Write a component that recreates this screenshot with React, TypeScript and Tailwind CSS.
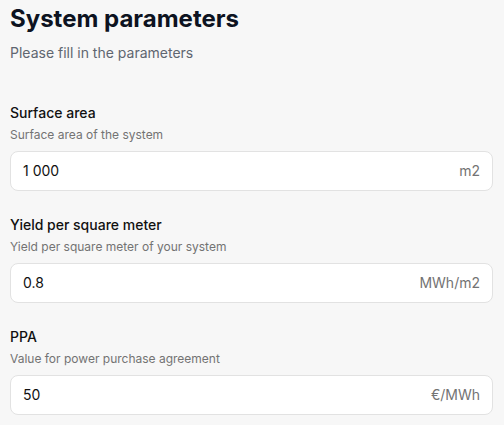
import React from "react";

interface Field {
  label: string;
  hint: string;
  value: string;
  unit: string;
}

const fields: Field[] = [
  { label: "Surface area", hint: "Surface area of the system", value: "1 000", unit: "m2" },
  {
    label: "Yield per square meter",
    hint: "Yield per square meter of your system",
    value: "0.8",
    unit: "MWh/m2",
  },
  { label: "PPA", hint: "Value for power purchase agreement", value: "50", unit: "€/MWh" },
];

const ParamField: React.FC<{ field: Field }> = ({ field }) => (
  <div className="flex flex-col">
    <label className="text-sm font-medium leading-5 text-[#111111]">{field.label}</label>
    <p className="mt-[4px] text-xs leading-4 text-[#737373]">{field.hint}</p>
    <div className="mt-[8px] flex h-[40px] items-center rounded-lg border border-[#e2e2e2] bg-white px-3">
      <input
        className="flex-1 bg-transparent text-sm text-[#111111] outline-none"
        defaultValue={field.value}
      />
      <span className="text-sm text-[#737373]">{field.unit}</span>
    </div>
  </div>
);

export default function App() {
  return (
    <div
      className="min-h-screen bg-[#f7f7f7] pl-[10px] pr-[11px] pt-[3px]"
      style={{ fontFamily: "Inter, 'Noto Sans', sans-serif" }}
    >
      <h1 className="text-2xl font-bold leading-8 text-[#0d1321]">System parameters</h1>
      <p className="mt-[8px] text-sm leading-5 text-[#5f6670]">Please fill in the parameters</p>
      <div className="mt-[40px] flex flex-col gap-[24px]">
        {fields.map((f) => (
          <ParamField key={f.label} field={f} />
        ))}
      </div>
    </div>
  );
}
